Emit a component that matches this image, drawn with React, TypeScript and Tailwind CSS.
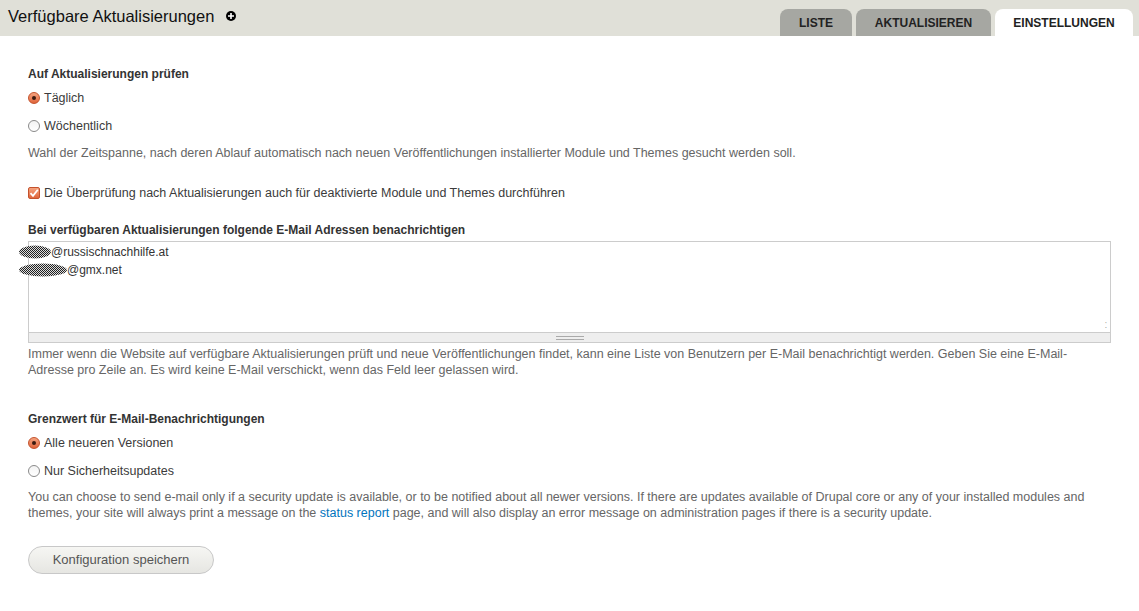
import React from "react";

const font = { fontFamily: '"Liberation Sans", Arial, sans-serif' };

function Radio({ checked }: { checked?: boolean }) {
  return checked ? (
    <span className="inline-flex h-[12px] w-[12px] items-center justify-center rounded-full border border-[#c4522c] bg-gradient-to-b from-[#f4a27e] to-[#e0653a]">
      <span className="h-[4px] w-[4px] rounded-full bg-[#3a1a10]" />
    </span>
  ) : (
    <span className="inline-block h-[12px] w-[12px] rounded-full border border-[#8a8a8a] bg-gradient-to-b from-[#f3f3f3] to-white" />
  );
}

function Check() {
  return (
    <span className="inline-flex h-[12px] w-[12px] items-center justify-center rounded-[2px] border border-[#c4522c] bg-gradient-to-b from-[#f4a27e] to-[#e0653a]">
      <svg width="10" height="10" viewBox="0 0 10 10">
        <path d="M1.5 5.2 L4 7.8 L8.8 1.8" stroke="white" strokeWidth="1.8" fill="none" />
      </svg>
    </span>
  );
}

function Blob({ w }: { w: number }) {
  return (
    <svg width={w} height="14" className="inline-block align-middle">
      <defs>
        <pattern id={`p${w}`} width="2" height="2" patternUnits="userSpaceOnUse">
          <rect width="2" height="2" fill="#ddd" />
          <rect width="1" height="1" fill="#222" />
          <rect x="1" y="1" width="1" height="1" fill="#222" />
        </pattern>
      </defs>
      <ellipse cx={w / 2} cy="7" rx={w / 2} ry="6.5" fill={`url(#p${w})`} />
    </svg>
  );
}

export default function App() {
  return (
    <div className="min-h-[611px] w-[1139px] bg-white text-[#3b3b3b]" style={font}>
      <div className="flex h-[36px] items-end justify-between bg-[#e0e0d8] pl-[8px] pr-[6px]">
        <div className="flex h-[36px] items-center gap-[12px] pb-[4px]">
          <span className="text-[16.5px] text-[#111]">Verfügbare Aktualisierungen</span>
          <span className="flex h-[10px] w-[10px] items-center justify-center rounded-full bg-black text-[10px] font-bold leading-none text-white">
            <svg width="6" height="6" viewBox="0 0 6 6"><path d="M3 0V6M0 3H6" stroke="white" strokeWidth="1.6" /></svg>
          </span>
        </div>
        <div className="flex items-end gap-[4px] text-[12px] font-bold text-[#222]">
          <div className="flex h-[27px] w-[72px] items-center justify-center rounded-t-[8px] bg-[#a6a7a2]">LISTE</div>
          <div className="flex h-[27px] w-[135px] items-center justify-center rounded-t-[8px] bg-[#a6a7a2]">AKTUALISIEREN</div>
          <div className="flex h-[27px] w-[138px] items-center justify-center rounded-t-[8px] bg-white">EINSTELLUNGEN</div>
        </div>
      </div>

      <div className="pl-[28px] pr-[28px] text-[12.5px]">
        <div className="pt-[30px] text-[12px] font-bold leading-[16px] text-[#333]">Auf Aktualisierungen prüfen</div>
        <div className="mt-[8px] flex items-center gap-[4px] leading-[16px]"><Radio checked />Täglich</div>
        <div className="mt-[12px] flex items-center gap-[4px] leading-[16px]"><Radio />Wöchentlich</div>
        <div className="mt-[11px] leading-[16px] text-[#666]">Wahl der Zeitspanne, nach deren Ablauf automatisch nach neuen Veröffentlichungen installierter Module und Themes gesucht werden soll.</div>
        <div className="mt-[24px] flex items-center gap-[4px] leading-[16px]"><Check />Die Überprüfung nach Aktualisierungen auch für deaktivierte Module und Themes durchführen</div>

        <div className="mt-[21px] text-[12px] font-bold leading-[16px] text-[#333]">Bei verfügbaren Aktualisierungen folgende E-Mail Adressen benachrichtigen</div>
        <div className="mt-[3px] w-[1083px]">
          <div className="relative h-[92px] border border-[#ccc] bg-white text-[12px] leading-[18px] text-[#333]">
            <div className="absolute left-[-10px] top-[1px]"><span className="inline-flex items-center"><Blob w={32} /><span>@russischnachhilfe.at</span></span></div>
            <div className="absolute left-[-10px] top-[19px]"><span className="inline-flex items-center"><Blob w={48} /><span>@gmx.net</span></span></div>
            <span className="absolute bottom-[2px] right-[3px] text-[8px] leading-none text-[#888]">⁚</span>
          </div>
          <div className="flex h-[10px] items-center justify-center border border-t-0 border-[#ccc] bg-[#eee]">
            <svg width="28" height="6"><path d="M0 1.5H28M0 4.5H28" stroke="#aaa" strokeWidth="1" /></svg>
          </div>
        </div>
        <div className="mt-[3px] leading-[16px] text-[#666]">
          Immer wenn die Website auf verfügbare Aktualisierungen prüft und neue Veröffentlichungen findet, kann eine Liste von Benutzern per E-Mail benachrichtigt werden. Geben Sie eine E-Mail-<br />
          Adresse pro Zeile an. Es wird keine E-Mail verschickt, wenn das Feld leer gelassen wird.
        </div>

        <div className="mt-[33px] text-[12px] font-bold leading-[16px] text-[#333]">Grenzwert für E-Mail-Benachrichtigungen</div>
        <div className="mt-[8px] flex items-center gap-[4px] leading-[16px]"><Radio checked />Alle neueren Versionen</div>
        <div className="mt-[12px] flex items-center gap-[4px] leading-[16px]"><Radio />Nur Sicherheitsupdates</div>
        <div className="mt-[10px] leading-[16px] text-[#666]">
          You can choose to send e-mail only if a security update is available, or to be notified about all newer versions. If there are updates available of Drupal core or any of your installed modules and<br />
          themes, your site will always print a message on the <span className="text-[#0074bd]">status report</span> page, and will also display an error message on administration pages if there is a security update.
        </div>

        <button className="mt-[25px] h-[28px] w-[186px] rounded-[14px] border border-[#c8c8c8] bg-gradient-to-b from-[#f6f6f3] to-[#e6e6e2] text-[13px] text-[#555]" style={font}>
          Konfiguration speichern
        </button>
      </div>
    </div>
  );
}
